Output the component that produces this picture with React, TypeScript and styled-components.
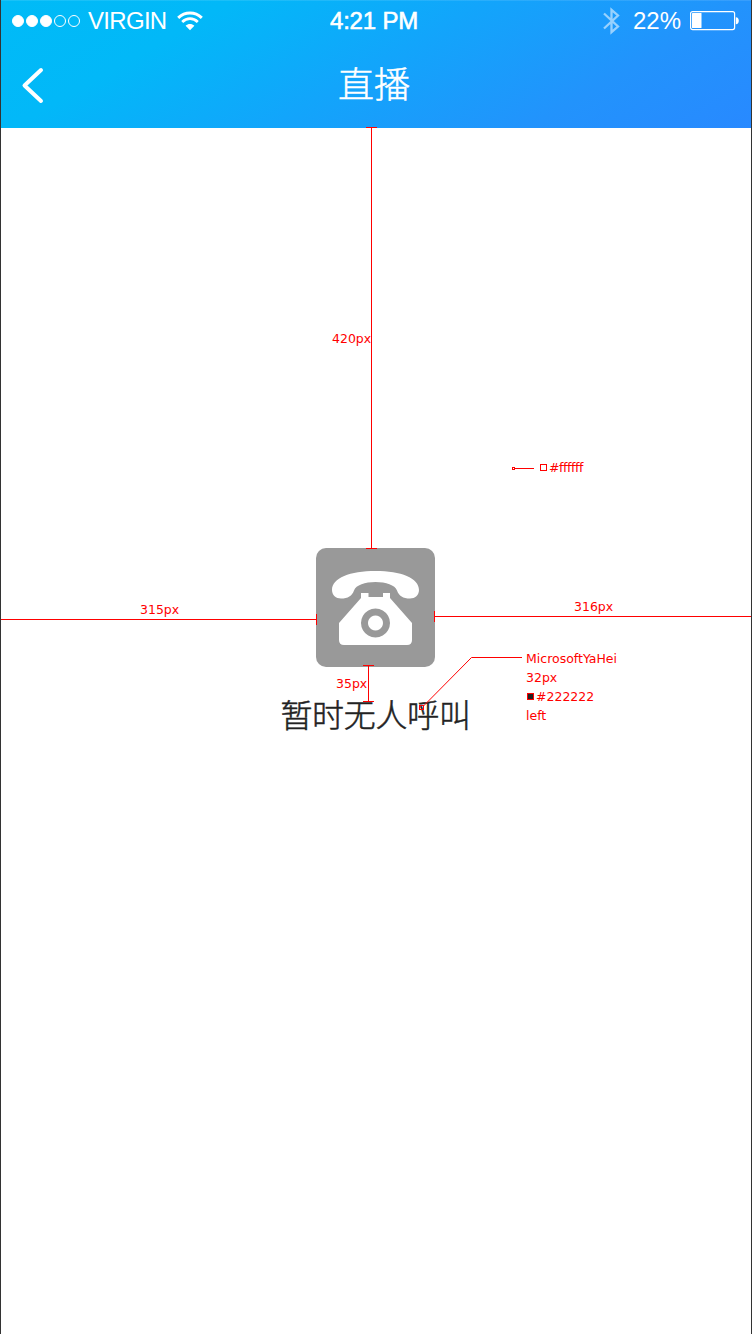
import React from "react";
import styled, { createGlobalStyle } from "styled-components";

const Global = createGlobalStyle`
  * { box-sizing: border-box; }
  body { margin: 0; background: #fff; }
`;

const Screen = styled.div`
  position: relative;
  width: 752px;
  height: 1334px;
  overflow: hidden;
  display: flex;
  flex-direction: column;
  background: #fff;
  border-left: 1px solid #333;
  border-right: 1px solid #333;
  font-family: "Liberation Sans", "Noto Sans CJK SC", sans-serif;
`;

const Header = styled.header`
  height: 128px;
  flex: none;
  display: flex;
  flex-direction: column;
  background: linear-gradient(150deg, #00bbf7 0%, #02b8f8 24%, #12a5fb 50%, #2293fc 77%, #2889ff 100%);
  box-shadow: inset 0 1px 0 rgba(255, 255, 255, 0.1);
  color: #fff;
`;

const StatusBar = styled.div`
  height: 41px;
  display: grid;
  grid-template-columns: 1fr auto 1fr;
  align-items: center;
  padding: 0 12px 0 12px;
  font-size: 24px;
  line-height: 41px;
`;

const StatusGroup = styled.div<{ $end?: boolean }>`
  display: flex;
  align-items: center;
  justify-content: ${(p) => (p.$end ? "flex-end" : "flex-start")};
`;

const Signal = styled.div`
  display: flex;
  gap: 2px;
  margin-left: -0.6px;
  margin-right: 7.6px;
`;

const Dot = styled.i<{ $on?: boolean }>`
  width: 12px;
  height: 12px;
  border-radius: 50%;
  border: 1px solid #fff;
  background: ${(p) => (p.$on ? "#fff" : "transparent")};
`;

const Carrier = styled.span`
  width: 79px;
  margin-right: 10px;
  letter-spacing: -0.7px;
  white-space: nowrap;
`;

const Clock = styled.span`
  padding-right: 4px;
  letter-spacing: -0.2px;
  -webkit-text-stroke: 0.6px #fff;
`;

const Percent = styled.span`
  margin: 0 9px 0 13px;
`;

const NavBar = styled.div`
  flex: 1;
  display: grid;
  grid-template-columns: 100px 1fr 100px;
  align-items: center;
  padding-bottom: 1px;
`;

const BackButton = styled.button`
  width: 60px;
  height: 60px;
  padding: 1px 0 0 19px;
  border: 0;
  background: none;
  display: flex;
  align-items: center;
`;

const Title = styled.h1`
  margin: 0;
  padding: 0 4px 4px 0;
  text-align: center;
  font: 300 36px/48px "Noto Sans CJK SC", sans-serif;
  -webkit-text-stroke: 0.5px #fff;
`;

const Empty = styled.main`
  flex: 1;
  display: flex;
  flex-direction: column;
  align-items: center;
  padding: 420px 1px 0 0;
`;

const PhoneTile = styled.div`
  width: 119px;
  height: 119px;
  margin-right: 1px;
  border-radius: 10px;
  background: #999;
`;

const Message = styled.p`
  margin: 22px 0 0;
  color: #222;
  font: 300 32px/48px "Noto Sans CJK SC", sans-serif;
  letter-spacing: -0.3px;
  -webkit-text-stroke: 0.5px #222;
`;

const Guides = styled.svg`
  position: absolute;
  left: -1px;
  top: 0;
  fill: none;
  stroke: #f00;
  pointer-events: none;
`;

const Note = styled.div<{ $x: number; $y: number; $tight?: boolean }>`
  position: absolute;
  left: ${(p) => p.$x - 1}px;
  top: ${(p) => p.$y}px;
  color: #f00;
  font: 12.5px/19px "DejaVu Sans", sans-serif;
  letter-spacing: ${(p) => (p.$tight ? "-0.4px" : "0")};
  white-space: nowrap;
`;

const NoteRow = styled.div`
  display: flex;
  align-items: center;
  gap: 2px;
`;

const Swatch = styled.i<{ $color: string }>`
  width: 7px;
  height: 7px;
  margin-left: 1px;
  margin-top: -1px;
  border: 1px solid #f00;
  background: ${(p) => p.$color};
`;

const Wifi = () => (
  <svg width="26" height="20" viewBox="0 0 26 20" fill="none" stroke="#fff">
    <path d="M1.200 6.800C8 .4 18 .4 24.800 6.800" strokeWidth="3" />
    <path d="M5.200 11C9.800 6.600 16.200 6.600 20.800 11" strokeWidth="2.8" />
    <path d="M8.600 14.700c2.500-2.400 6.300-2.400 8.800 0L13 19.200z" fill="#fff" stroke="none" />
  </svg>
);

const Bluetooth = () => (
  <svg width="17" height="28" viewBox="0 0 17 28" fill="none" stroke="#fff" strokeOpacity=".55" strokeWidth="2.3">
    <path d="M1 6.500 15 19.500 8.500 25.200V2.800L15 8.500 1 21.500" />
  </svg>
);

const Battery = () => (
  <svg width="49" height="20" viewBox="0 0 49 20">
    <rect x=".6" y=".6" width="44" height="18" rx="2" fill="none" stroke="#fff" strokeWidth="1.2" />
    <rect x="2" y="2" width="9.500" height="15" rx=".5" fill="#fff" />
    <path d="M45.800 6.300c4 0 4 7 0 7z" fill="#fff" />
  </svg>
);

const Phone = () => (
  <svg width="119" height="119" viewBox="0 0 119 119">
    <path
      fill="#fff"
      d="M16 42C16 30 34 23 59.500 23S103 30 103 42C103 47 99 50.500 94 50.500C87 50.500 83 48 81 42.500C79 37 70 34 59.500 34S40 37 38 42.500C36 48 32 50.500 25 50.500C20 50.500 16 47 16 42Z"
    />
    <path
      fill="#fff"
      fillRule="evenodd"
      d="M45 45H52.500V49H67V45H74V50L96 75V92Q96 97 91 97H28Q23 97 23 92V75L45 50ZM59.500 60.500a14.500 14.500 0 1 0 .01 0ZM59.500 67.500a7.500 7.500 0 1 1-.01 0Z"
    />
  </svg>
);

export default function App() {
  return (
    <Screen>
      <Global />
      <Header>
        <StatusBar>
          <StatusGroup>
            <Signal>
              <Dot $on />
              <Dot $on />
              <Dot $on />
              <Dot />
              <Dot />
            </Signal>
            <Carrier>VIRGIN</Carrier>
            <Wifi />
          </StatusGroup>
          <Clock>4:21 PM</Clock>
          <StatusGroup $end>
            <Bluetooth />
            <Percent>22%</Percent>
            <Battery />
          </StatusGroup>
        </StatusBar>
        <NavBar>
          <BackButton aria-label="返回">
            <svg width="26" height="38" viewBox="0 0 26 38" fill="none" stroke="#fff" strokeWidth="4" strokeLinecap="round" strokeLinejoin="round">
              <path d="M21 4 4.500 19.500 21 35" />
            </svg>
          </BackButton>
          <Title>直播</Title>
        </NavBar>
      </Header>
      <Empty>
        <PhoneTile>
          <Phone />
        </PhoneTile>
        <Message>暂时无人呼叫</Message>
      </Empty>
      <Guides width="752" height="1334" viewBox="0 0 752 1334">
        <path d="M371.500 127V548M366 127.500H377M366 548.500H377" />
        <path d="M0 619.500H316M.5 614V625M316.500 614V625" />
        <path d="M435 616.500H752M434.500 611V622M751.500 611V622" />
        <path d="M368.500 666V702M363 665.500H374M363 701.500H374" />
        <path d="M522 657.500H471.500L423.500 706" />
        <rect x="419.500" y="705.500" width="4" height="4" />
        <rect x="512.500" y="467.500" width="2" height="2" />
        <path d="M515 468.500H534" />
      </Guides>
      <Note $x={332} $y={329}>420px</Note>
      <Note $x={140} $y={600}>315px</Note>
      <Note $x={574} $y={597}>316px</Note>
      <Note $x={336} $y={674}>35px</Note>
      <Note $x={539} $y={458} $tight>
        <NoteRow>
          <Swatch $color="#fff" />
          #ffffff
        </NoteRow>
      </Note>
      <Note $x={526} $y={649}>
        <div>MicrosoftYaHei</div>
        <div>32px</div>
        <NoteRow>
          <Swatch $color="#222" />
          #222222
        </NoteRow>
        <div>left</div>
      </Note>
    </Screen>
  );
}
